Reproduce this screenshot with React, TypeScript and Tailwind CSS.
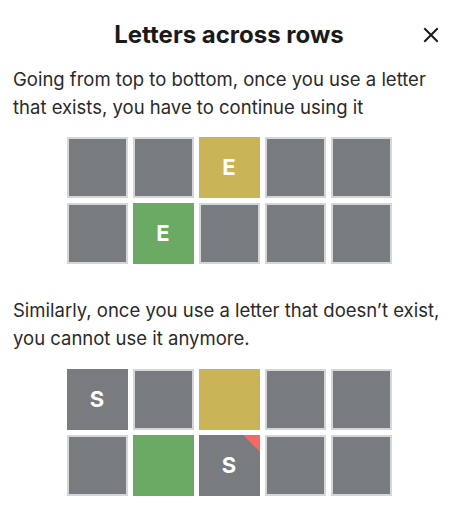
import React from 'react';

type Tile = { letter?: string; tone: 'absent' | 'empty' | 'present' | 'correct'; flag?: boolean };

const toneClass: Record<Tile['tone'], string> = {
  empty: 'bg-[#787c7e] border-2 border-[#d3d6da]',
  absent: 'bg-[#787c7e]',
  present: 'bg-[#c9b458]',
  correct: 'bg-[#6aaa64]',
};

const TileGrid: React.FC<{ rows: Tile[][] }> = ({ rows }) => (
  <div className="flex flex-col items-center gap-[5px]">
    {rows.map((row, r) => (
      <div key={r} className="flex gap-[5px]">
        {row.map((t, i) => (
          <div
            key={i}
            className={`relative w-[61px] h-[61px] flex items-center justify-center overflow-hidden text-white text-[22px] font-bold ${toneClass[t.tone]}`}
          >
            {t.letter}
            {t.flag && (
              <svg className="absolute top-0 right-0" width="17" height="17" viewBox="0 0 17 17">
                <polygon points="0,0 17,0 17,17" fill="#f46a63" />
              </svg>
            )}
          </div>
        ))}
      </div>
    ))}
  </div>
);

export default function App() {
  const first: Tile[][] = [
    [{ tone: 'empty' }, { tone: 'empty' }, { tone: 'present', letter: 'E' }, { tone: 'empty' }, { tone: 'empty' }],
    [{ tone: 'empty' }, { tone: 'correct', letter: 'E' }, { tone: 'empty' }, { tone: 'empty' }, { tone: 'empty' }],
  ];
  const second: Tile[][] = [
    [{ tone: 'absent', letter: 'S' }, { tone: 'empty' }, { tone: 'present' }, { tone: 'empty' }, { tone: 'empty' }],
    [{ tone: 'empty' }, { tone: 'correct' }, { tone: 'absent', letter: 'S', flag: true }, { tone: 'empty' }, { tone: 'empty' }],
  ];

  return (
    <div className="w-[454px] h-[512px] bg-white font-['Inter',sans-serif] pl-[13px] pr-[9px] pt-[20px] overflow-hidden">
      <div className="grid grid-cols-[1fr_auto_1fr] items-center">
        <div />
        <h1 className="text-[24px] leading-[30px] font-bold text-[#1a1a1b]">Letters across rows</h1>
        <div className="flex justify-end">
          <svg width="16" height="16" viewBox="0 0 16 16" className="mr-[6px]">
            <path d="M2 2 L14 14 M14 2 L2 14" stroke="#1a1a1b" strokeWidth="2" strokeLinecap="square" />
          </svg>
        </div>
      </div>

      <p className="mt-[15px] text-[18.5px] leading-[28px] text-[#2a2a2a]">
        Going from top to bottom, once you use a letter that exists, you have to continue using it
      </p>
      <div className="mt-[16px]">
        <TileGrid rows={first} />
      </div>

      <p className="mt-[32px] text-[18.5px] leading-[28px] text-[#2a2a2a]">
        Similarly, once you use a letter that doesn’t exist, you cannot use it anymore.
      </p>
      <div className="mt-[17px]">
        <TileGrid rows={second} />
      </div>
    </div>
  );
}
